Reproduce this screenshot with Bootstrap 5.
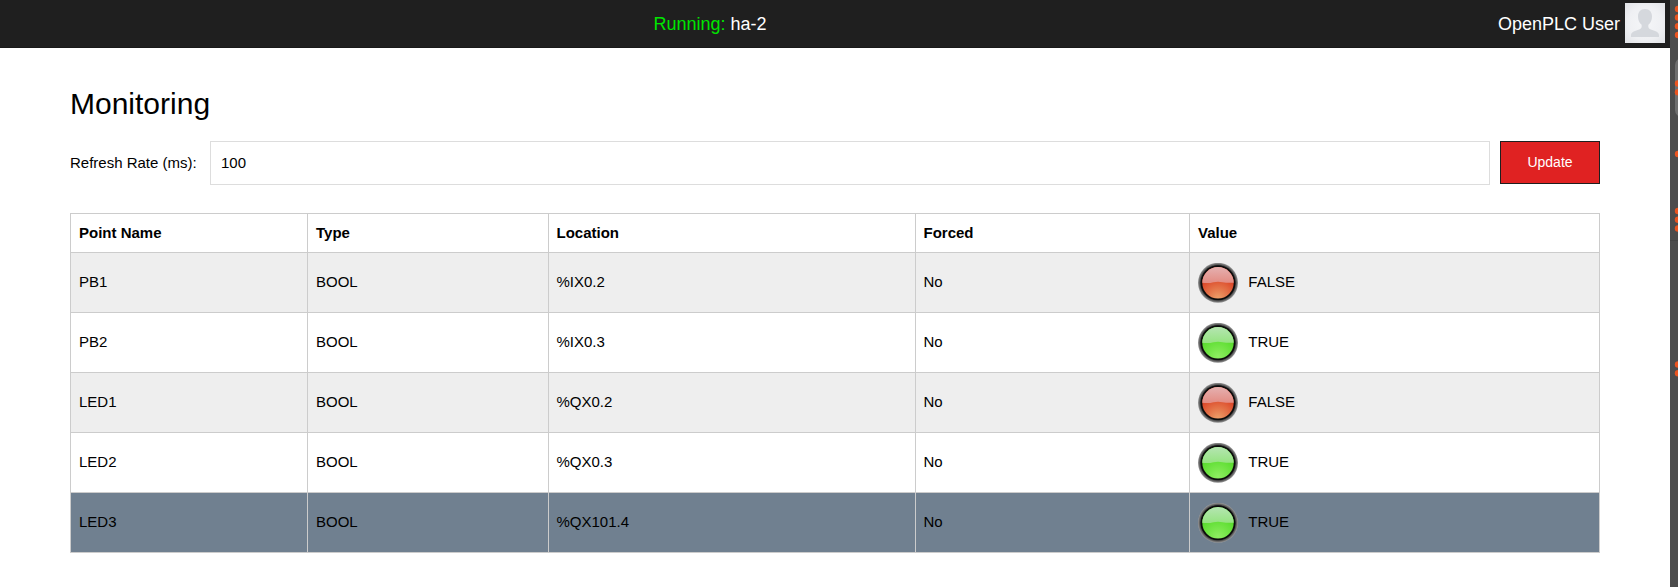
<!DOCTYPE html>
<html lang="en">
<head>
<meta charset="utf-8">
<title>OpenPLC Monitoring</title>
<link href="https://cdn.jsdelivr.net/npm/bootstrap@5.3.0/dist/css/bootstrap.min.css" rel="stylesheet">
<style>
body{font-family:"Liberation Sans",Arial,sans-serif;font-size:15px;line-height:22px;color:#000;background:#fff;height:587px;overflow:hidden}
.topbar{height:48px;background:#1f1f1f;border-bottom:1px solid #191919;font-size:18px;padding:0 5px 0 0}
.status{padding-left:653.4px}
.running{color:#00e600}
.avatar{margin:0 0 2px 5px}
.dock{width:8px;background:#4c4c4c}
.page-body{padding:34px 70px 0}
h1.heading{font-size:30px;line-height:44px;margin:0 0 15px;font-weight:400}
.rate-label{width:140px}
.rate-input{height:44px;border:1px solid #ddd;border-radius:0;padding:0 10px 2px;font-size:15px;color:#000}
.btn-update{width:100px;height:43px;margin-left:10px;background:#e02222;border:1px solid #1f1f1f;border-radius:0;color:#fff;font-size:14px;padding:0}
.points{width:1530px;table-layout:fixed;border-collapse:collapse;margin:28px 0 0;color:#000}
.points th,.points td{border:1px solid #ccc;padding:0 8px;vertical-align:middle}
.points td{padding-bottom:2px}
.points td:last-child{padding-bottom:0}
.points th:nth-child(3),.points td:nth-child(3),.points th:nth-child(4),.points td:nth-child(4){padding-left:7.5px}
.points thead tr{height:39px}
.points tbody tr{height:60px}
.points tbody tr:nth-child(odd){background:#eee}
.points tbody tr.picked{background:#708090}
.led{width:40px;height:40px;flex:none;display:block}
.state{margin:0 0 2px 10.3px}
</style>
<script src="https://cdn.jsdelivr.net/npm/bootstrap@5.3.0/dist/js/bootstrap.bundle.min.js"></script>
</head>
<body class="d-flex">
<svg width="0" height="0" class="position-absolute" aria-hidden="true">
<defs>
<radialGradient id="rim"><stop offset=".84" stop-color="#111"/><stop offset=".89" stop-color="#484848"/><stop offset=".95" stop-color="#757575"/><stop offset="1" stop-color="#999"/></radialGradient>
<radialGradient id="red" cx=".5" cy="1" r=".65"><stop stop-color="#eda069"/><stop offset="1" stop-color="#dc4a2b"/></radialGradient>
<radialGradient id="green" cx=".5" cy=".95" r=".65"><stop stop-color="#8fee62"/><stop offset="1" stop-color="#58dc2c"/></radialGradient>
<linearGradient id="redGloss" x2="0" y2="1"><stop stop-color="#e5b0b0"/><stop offset="1" stop-color="#e38b82"/></linearGradient>
<linearGradient id="greenGloss" x2="0" y2="1"><stop stop-color="#b5e5b2"/><stop offset="1" stop-color="#95e380"/></linearGradient>
<radialGradient id="face" r=".7"><stop stop-color="#f5f6f8"/><stop offset=".6" stop-color="#eff0f3"/><stop offset="1" stop-color="#e1e3e7"/></radialGradient>
<symbol id="led-false" viewBox="0 0 40 40"><circle cx="20" cy="19.800" r="20" fill="url(#rim)"/><circle cx="20" cy="19.800" r="17.300" fill="#0c0c0c"/><circle cx="20" cy="19.800" r="15.700" fill="url(#red)"/><path d="M4.300 19.800a15.700 15.700 0 0 1 31.400 0Q28 20 24.500 19.200Q20 18.500 15.500 19.200Q11 20.500 4.300 19.800Z" fill="url(#redGloss)"/></symbol>
<symbol id="led-true" viewBox="0 0 40 40"><circle cx="20" cy="19.800" r="20" fill="url(#rim)"/><circle cx="20" cy="19.800" r="17.300" fill="#0c0c0c"/><circle cx="20" cy="19.800" r="15.700" fill="url(#green)"/><path d="M4.300 19.800a15.700 15.700 0 0 1 31.400 0Q28 20 24.500 19.200Q20 18.500 15.500 19.200Q11 20.500 4.300 19.800Z" fill="url(#greenGloss)"/></symbol>
</defs>
</svg>
<div class="flex-grow-1">
<header class="topbar d-flex align-items-center justify-content-between">
<div class="status"><span class="running">Running:</span> <span class="text-white">ha-2</span></div>
<div class="d-flex align-items-center text-white">OpenPLC User
<svg class="avatar" width="40" height="40" viewBox="0 0 40 40"><rect width="40" height="40" fill="url(#face)"/><path d="M20 6c-4.600 0-7 3.200-7 7.400 0 3.600 1.300 6.400 3.600 8.300.5 2.300-.2 4-2.400 4.900C10.500 28 6 28.500 6 32.500V34h28v-1.500c0-4-4.500-4.500-8.200-5.900-2.200-.9-2.900-2.600-2.400-4.900 2.300-1.900 3.600-4.700 3.600-8.300C27 9.200 24.600 6 20 6Z" fill="#d5d8dd"/></svg>
</div>
</header>
<main class="page-body">
<h1 class="heading">Monitoring</h1>
<form class="d-flex">
<label class="rate-label align-self-center" for="rate">Refresh Rate (ms):</label>
<input id="rate" class="form-control flex-grow-1 w-auto rate-input" value="100">
<button type="button" class="btn btn-update flex-shrink-0">Update</button>
</form>
<table class="points">
<colgroup><col style="width:237px"><col style="width:241px"><col style="width:367px"><col style="width:274px"><col></colgroup>
<thead><tr><th>Point Name</th><th>Type</th><th>Location</th><th>Forced</th><th>Value</th></tr></thead>
<tbody>
<tr><td>PB1</td><td>BOOL</td><td>%IX0.2</td><td>No</td><td><div class="d-flex align-items-center"><svg class="led"><use href="#led-false"/></svg><span class="state">FALSE</span></div></td></tr>
<tr><td>PB2</td><td>BOOL</td><td>%IX0.3</td><td>No</td><td><div class="d-flex align-items-center"><svg class="led"><use href="#led-true"/></svg><span class="state">TRUE</span></div></td></tr>
<tr><td>LED1</td><td>BOOL</td><td>%QX0.2</td><td>No</td><td><div class="d-flex align-items-center"><svg class="led"><use href="#led-false"/></svg><span class="state">FALSE</span></div></td></tr>
<tr><td>LED2</td><td>BOOL</td><td>%QX0.3</td><td>No</td><td><div class="d-flex align-items-center"><svg class="led"><use href="#led-true"/></svg><span class="state">TRUE</span></div></td></tr>
<tr class="picked"><td>LED3</td><td>BOOL</td><td>%QX101.4</td><td>No</td><td><div class="d-flex align-items-center"><svg class="led"><use href="#led-true"/></svg><span class="state">TRUE</span></div></td></tr>
</tbody>
</table>
</main>
</div>
<aside class="dock flex-shrink-0">
<svg class="d-block" width="8" height="587" viewBox="0 0 8 587"><rect x="5" y="58" width="40" height="59" rx="7" fill="#6e6e6e"/><path d="M0 240.500h8" stroke="#444"/>
<g fill="#e95420"><circle cx="8" cy="9" r="3.200"/><circle cx="8" cy="17.500" r="3.200"/><circle cx="8" cy="26.300" r="3.200"/><circle cx="8" cy="35" r="3.200"/><circle cx="8" cy="83.500" r="3.200"/><circle cx="8" cy="92.300" r="3.200"/><circle cx="8" cy="154" r="3.200"/><circle cx="8" cy="211" r="3.200"/><circle cx="8" cy="219.800" r="3.200"/><circle cx="8" cy="228.500" r="3.200"/><circle cx="8" cy="364.500" r="3.200"/><circle cx="8" cy="373.300" r="3.200"/></g></svg>
</aside>
</body>
</html>
